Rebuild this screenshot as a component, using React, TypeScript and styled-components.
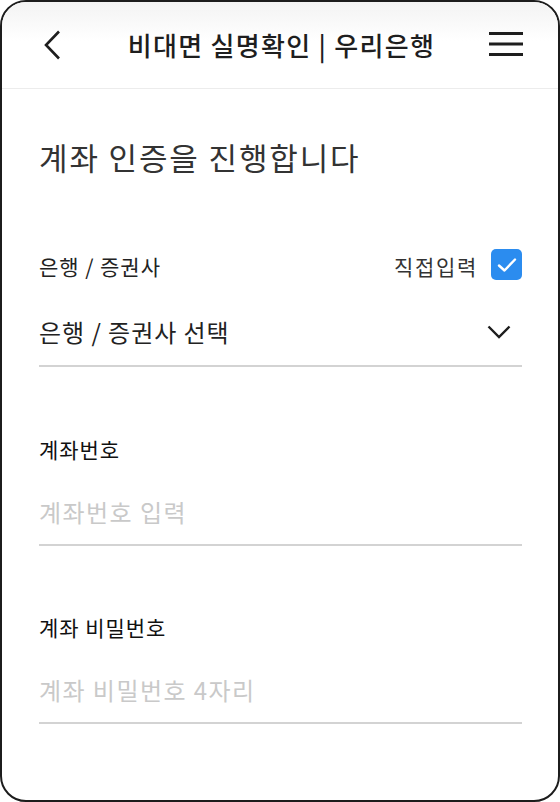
import React from "react";
import styled, { createGlobalStyle } from "styled-components";

const Global = createGlobalStyle`
  html, body { margin: 0; padding: 0; background: #ffffff; }
  body { font-family: "Noto Sans CJK KR", "Noto Sans", sans-serif; }
  * { box-sizing: border-box; }
`;

const Frame = styled.div`
  width: 560px;
  height: 802px;
  border: 2px solid #1c1c1c;
  border-radius: 26px;
  overflow: hidden;
  background: #ffffff;
  display: flex;
  flex-direction: column;
`;

const Header = styled.header`
  height: 87px;
  flex: none;
  display: grid;
  grid-template-columns: 1fr auto 1fr;
  align-items: center;
  padding: 0 35px 0 42px;
  border-bottom: 1px solid #ececec;
  background: linear-gradient(#f3f3f3 0%, #ffffff 45%);
`;

const IconButton = styled.button<{ $end?: boolean }>`
  border: none;
  background: none;
  padding: 0;
  display: flex;
  align-items: center;
  justify-self: ${(p) => (p.$end ? "end" : "start")};
  cursor: pointer;
`;

const Title = styled.h1`
  margin: 0 0 1px -4px;
  font-size: 26px;
  line-height: 1;
  font-weight: 500;
  color: #1e1e1e;
  letter-spacing: 0.05em;
  white-space: nowrap;
`;

const Body = styled.main`
  padding: 0 36px 0 37px;
  display: flex;
  flex-direction: column;
  letter-spacing: 0.06em;
`;

const Heading = styled.h2`
  margin: 52px 0 0 0;
  font-size: 31px;
  line-height: 1;
  font-weight: 400;
  color: #333333;
  letter-spacing: 0.06em;
`;

const LabelRow = styled.div<{ $top: number }>`
  margin-top: ${(p) => p.$top}px;
  height: 31px;
  display: flex;
  align-items: center;
  justify-content: space-between;
`;

const Label = styled.span`
  font-size: 21px;
  line-height: 1;
  color: #222222;
  margin-top: 3px;
`;

const Direct = styled.label`
  display: flex;
  align-items: center;
  gap: 13px;
  font-size: 21px;
  line-height: 1;
  color: #333333;
  letter-spacing: 0.08em;
`;

const DirectText = styled.span`
  margin-top: 3px;
`;

const CheckBox = styled.span`
  width: 31px;
  height: 31px;
  border-radius: 5px;
  background: #2b8cef;
  display: flex;
  align-items: center;
  justify-content: center;
`;

const SelectRow = styled.div`
  margin-top: 40px;
  padding: 0 11px 21px 0;
  border-bottom: 2px solid #d3d3d3;
  display: flex;
  align-items: center;
  justify-content: space-between;
`;

const SelectText = styled.span`
  font-size: 24px;
  line-height: 1;
  color: #222222;
`;

const FieldLabel = styled.div<{ $top: number }>`
  margin-top: ${(p) => p.$top}px;
  font-size: 21px;
  line-height: 1;
  color: #111111;
`;

const InputWrap = styled.div`
  margin-top: 39px;
  padding-bottom: 19px;
  border-bottom: 2px solid #d3d3d3;
`;

const TextInput = styled.input`
  display: block;
  width: 100%;
  height: 26px;
  border: none;
  outline: none;
  padding: 0;
  font-family: "Noto Sans CJK KR", "Noto Sans", sans-serif;
  font-size: 24px;
  line-height: 26px;
  letter-spacing: 0.06em;
  color: #222222;
  background: transparent;
  &::placeholder {
    color: #c9c9c9;
  }
`;

export default function App() {
  return (
    <>
      <Global />
      <Frame>
        <Header>
          <IconButton aria-label="뒤로">
            <svg width="17" height="30" viewBox="0 0 17 30">
              <polyline
                points="15,1.5 2,15 15,28.5"
                fill="none"
                stroke="#1e1e1e"
                strokeWidth="2.6"
                strokeLinejoin="miter"
              />
            </svg>
          </IconButton>
          <Title>비대면 실명확인 | 우리은행</Title>
          <IconButton aria-label="메뉴" $end>
            <svg width="34" height="26" viewBox="0 0 34 26">
              <rect x="0" y="0" width="34" height="3" fill="#1e1e1e" />
              <rect x="0" y="10.5" width="34" height="3" fill="#1e1e1e" />
              <rect x="0" y="21" width="34" height="3" fill="#1e1e1e" />
            </svg>
          </IconButton>
        </Header>
        <Body>
          <Heading>계좌 인증을 진행합니다</Heading>
          <LabelRow $top={77}>
            <Label>은행 / 증권사</Label>
            <Direct>
              <DirectText>직접입력</DirectText>
              <CheckBox>
                <svg width="20" height="16" viewBox="0 0 20 16">
                  <polyline
                    points="2,8.5 7.5,13.5 18,2.5"
                    fill="none"
                    stroke="#ffffff"
                    strokeWidth="2.4"
                    strokeLinecap="round"
                    strokeLinejoin="round"
                  />
                </svg>
              </CheckBox>
            </Direct>
          </LabelRow>
          <SelectRow>
            <SelectText>은행 / 증권사 선택</SelectText>
            <svg width="24" height="14" viewBox="0 0 24 14">
              <polyline
                points="1.5,1.5 12,12 22.5,1.5"
                fill="none"
                stroke="#1e1e1e"
                strokeWidth="2.4"
              />
            </svg>
          </SelectRow>
          <FieldLabel $top={72}>계좌번호</FieldLabel>
          <InputWrap>
            <TextInput placeholder="계좌번호 입력" />
          </InputWrap>
          <FieldLabel $top={71}>계좌 비밀번호</FieldLabel>
          <InputWrap>
            <TextInput placeholder="계좌 비밀번호 4자리" type="password" />
          </InputWrap>
        </Body>
      </Frame>
    </>
  );
}
